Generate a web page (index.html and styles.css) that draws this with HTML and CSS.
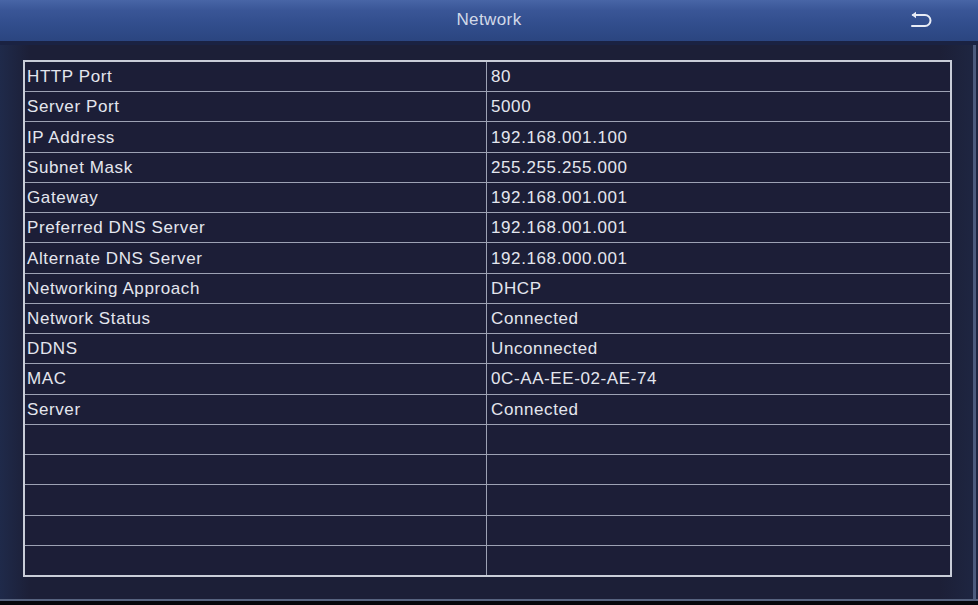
FILE: index.html
```html
<!DOCTYPE html>
<html>
<head>
<meta charset="utf-8">
<link rel="stylesheet" href="styles.css">
</head>
<body>
<div class="screen">
  <header class="titlebar">
    <span class="title">Network</span>
    <svg class="back" width="23" height="17" viewBox="0 0 23 17">
      <path d="M3 4 H15 a5.5 5.5 0 0 1 0 11 H2" fill="none" stroke="#e8ecf6" stroke-width="2" stroke-linecap="round"/>
      <path d="M1.5 4 L6 0.8 L6 7.2 Z" fill="#e8ecf6"/>
    </svg>
  </header>
  <main class="content">
    <div class="grid">
      <div class="cell k">HTTP Port</div><div class="cell v">80</div>
      <div class="cell k">Server Port</div><div class="cell v">5000</div>
      <div class="cell k">IP Address</div><div class="cell v">192.168.001.100</div>
      <div class="cell k">Subnet Mask</div><div class="cell v">255.255.255.000</div>
      <div class="cell k">Gateway</div><div class="cell v">192.168.001.001</div>
      <div class="cell k">Preferred DNS Server</div><div class="cell v">192.168.001.001</div>
      <div class="cell k">Alternate DNS Server</div><div class="cell v">192.168.000.001</div>
      <div class="cell k">Networking Approach</div><div class="cell v">DHCP</div>
      <div class="cell k">Network Status</div><div class="cell v">Connected</div>
      <div class="cell k">DDNS</div><div class="cell v">Unconnected</div>
      <div class="cell k">MAC</div><div class="cell v">0C-AA-EE-02-AE-74</div>
      <div class="cell k">Server</div><div class="cell v">Connected</div>
      <div class="cell k"></div><div class="cell v"></div>
      <div class="cell k"></div><div class="cell v"></div>
      <div class="cell k"></div><div class="cell v"></div>
      <div class="cell k"></div><div class="cell v"></div>
      <div class="cell k"></div><div class="cell v"></div>
    </div>
  </main>
</div>
</body>
</html>
```
FILE: styles.css
```css
html, body {
  margin: 0;
  padding: 0;
  background: #06070c;
}
body {
  width: 978px;
  height: 605px;
  overflow: hidden;
  font-family: "Liberation Sans", Arial, sans-serif;
}
.screen {
  width: 978px;
  height: 601px;
  display: flex;
  flex-direction: column;
  background: linear-gradient(90deg, #1f2a4a 0px, #1c1f37 30px, #1c1f37 940px, #1e2540 970px);
  border-bottom: 2px solid #56627e;
  box-sizing: border-box;
}
.titlebar {
  height: 45px;
  flex: none;
  box-sizing: border-box;
  border-bottom: 4px solid #1a2242;
  background: linear-gradient(180deg, #4865a6 0px, #3a5697 10px, #314d8c 25px, #2b4580 41px);
  display: flex;
  align-items: center;
  justify-content: center;
  position: relative;
  padding-bottom: 2px;
}
.title {
  color: #d2d9e8;
  font-size: 17px;
  letter-spacing: 0.4px;
}
.back {
  position: absolute;
  right: 45px;
  top: 11px;
}
.content {
  flex: 1;
  padding: 15px 0 0 23px;
  border-right: 3px solid #4c5a7c;
  margin-right: 2px;
}
.grid {
  width: 929px;
  height: 517px;
  box-sizing: border-box;
  border: 2px solid #c9cdd8;
  background: #9da2b4;
  display: grid;
  grid-template-columns: 461px 1fr;
  grid-template-rows: repeat(17, 1fr);
  gap: 1px;
}
.cell {
  background: #1c1e37;
  color: #e4e6ee;
  font-size: 17px;
  letter-spacing: 0.6px;
  display: flex;
  align-items: center;
  padding-top: 1px;
  white-space: nowrap;
}
.k { padding-left: 2px; }
.v { padding-left: 4px; }
```
